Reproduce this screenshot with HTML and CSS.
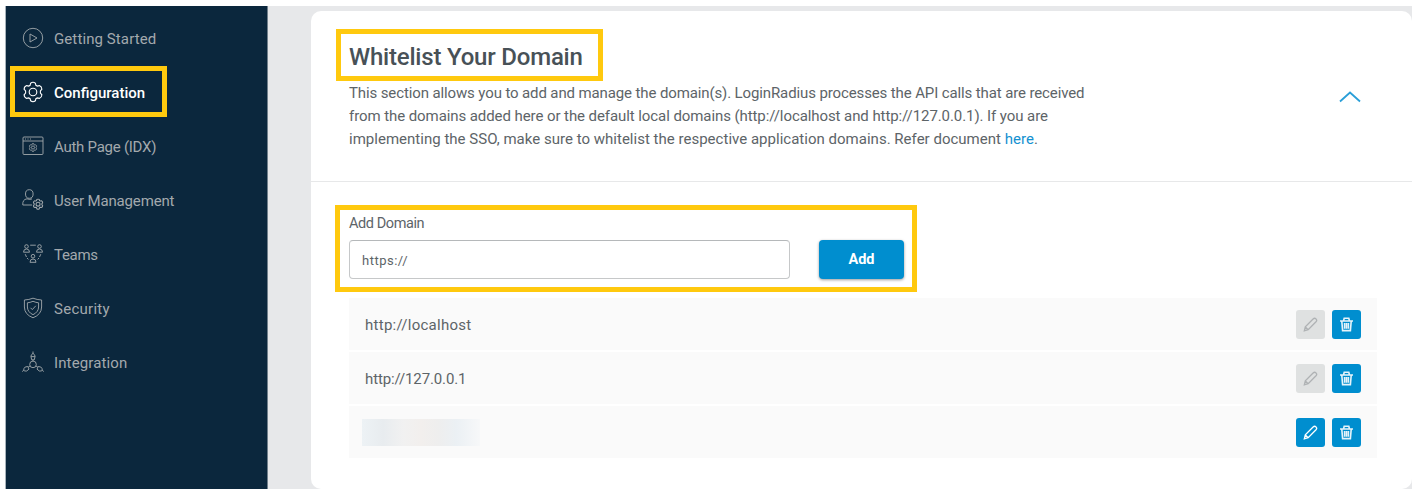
FILE: index.html
```html
<!DOCTYPE html>
<html lang="en">
<head>
<meta charset="utf-8">
<title>Whitelist Your Domain</title>
<link rel="stylesheet" href="styles.css">
</head>
<body>
<svg class="defs" aria-hidden="true">
  <symbol id="gear" viewBox="0 0 22 22">
    <path d="M8.6 2.2Q11 .4 13.4 2.2L13.9 4.3L15.3 5.1L17.3 4.6Q19.8 5.5 19.9 8.2L18.4 9.9V12.1L19.9 13.8Q19.8 16.5 17.3 17.4L15.3 16.9L13.9 17.7L13.4 19.8Q11 21.6 8.6 19.8L8.1 17.7L6.7 16.9L4.7 17.4Q2.2 16.5 2.1 13.8L3.6 12.1V9.9L2.1 8.2Q2.2 5.5 4.7 4.6L6.7 5.1L8.1 4.3Z"/>
    <circle cx="11" cy="11" r="3.8"/>
  </symbol>
  <symbol id="pencil" viewBox="0 0 15 15">
    <path d="M1.3 13.8L2.3 9.9L10.1 2Q11.6.6 13 1.9Q14.4 3.3 13 4.8L5.2 12.7ZM2.6 10.3L4.9 12.5"/>
  </symbol>
  <symbol id="trash" viewBox="0 0 15 15">
    <path d="M1 4H14M4.6 3.7L5.2 1.3H9.8L10.4 3.7M2.8 4.3L3.6 13.6H11.4L12.2 4.3M5.6 6V11.8M7.5 6V11.8M9.4 6V11.8"/>
  </symbol>
</svg>
<div class="app">
  <nav class="sidebar">
    <a class="item"><svg class="icon" viewBox="0 0 22 22"><circle cx="11" cy="11" r="9.7"/><path d="M8 7L15 11L8 15Z"/></svg><span class="t-start">Getting Started</span></a>
    <a class="item active"><svg class="icon"><use href="#gear"/></svg><span class="t-config">Configuration</span></a>
    <a class="item"><svg class="icon" viewBox="0 0 22 22"><rect x="1" y="2" width="20" height="17.5" rx="1"/><path d="M1 6H21M3 4H4M5.5 4H6.5M8 4H9"/><use class="bold" href="#gear" x="6.5" y="8" width="9" height="9"/></svg><span class="t-auth">Auth Page (IDX)</span></a>
    <a class="item"><svg class="icon" viewBox="0 0 22 22"><ellipse cx="7.3" cy="5" rx="3.8" ry="4.3"/><path d="M10 16H.8Q.3 10.5 5 9.8Q8 11 10 9.9"/><use class="bold" href="#gear" x="10.3" y="9.4" width="11.5" height="11.5"/></svg><span class="t-user">User Management</span></a>
    <a class="item"><svg class="icon" viewBox="0 0 22 22"><circle cx="4.5" cy="3.5" r="1.8"/><circle cx="17.5" cy="3.5" r="1.8"/><circle cx="11" cy="13.2" r="1.8"/><path d="M1.5 9.2Q1.5 6 4.5 6Q7.5 6 7.5 9.2ZM14.5 9.2Q14.5 6 17.5 6Q20.5 6 20.5 9.2ZM8 19.3Q8 16 11 16Q14 16 14 19.3ZM8.2 2.2H13.8M3.2 11.2L4.5 14M5 15L6.4 16.4M18.8 11.2L17.5 14M17 15L15.6 16.4"/></svg><span class="t-teams">Teams</span></a>
    <a class="item"><svg class="icon" viewBox="0 0 22 22"><path d="M11 1.2Q15 2.8 19.6 3V10Q19.5 17.5 11 20.8Q2.5 17.5 2.4 10V3Q7 2.8 11 1.2ZM11 4.3Q14 5.6 16.6 5.8V10Q16.5 15 11 17.7Q5.5 15 5.4 10V5.8Q8 5.6 11 4.3ZM8.5 10.8L10.3 12.6L13.8 8.8"/></svg><span class="t-sec">Security</span></a>
    <a class="item"><svg class="icon" viewBox="0 0 22 22"><circle cx="11" cy="13.4" r="3.3"/><path d="M11 .5V2.6M9.7 8.8L8.9 5.2Q9.4 3.2 11 2.4Q12.6 3.2 13.1 5.2L12.3 8.8ZM9.1 5.6H12.9M11 8.8V10M8 15L6.2 16.1M14 15L15.8 16.1M5.8 15.5L7 18.1L4.7 20Q2.6 20.3 1.7 19.4Q1.6 17.2 3.2 16ZM16.2 15.5L15 18.1L17.3 20Q19.4 20.3 20.3 19.4Q20.4 17.2 18.8 16ZM.2 20.5L1.7 19.4M21.8 20.5L20.3 19.4"/></svg><span class="t-int">Integration</span></a>
  </nav>
  <main class="main">
    <section class="card">
      <header class="head">
        <div>
          <h1><span>Whitelist Your Domain</span></h1>
          <p class="copy">
            <span class="l1">This section allows you to add and manage the domain(s). LoginRadius processes the API calls that are received</span>
            <span class="l2">from the domains added here or the default local domains (http://localhost and http://127.0.0.1). If you are</span>
            <span class="l3">implementing the SSO, make sure to whitelist the respective application domains. Refer document <a>here</a>.</span>
          </p>
        </div>
        <svg class="chevron" viewBox="0 0 22 12"><path d="M1 10.5L11 1.5L21 10.5"/></svg>
      </header>
      <div class="body">
        <div class="form">
          <label for="domain">Add Domain</label>
          <div class="controls"><input id="domain" value="https://"><button class="add">Add</button></div>
        </div>
        <ul class="rows">
          <li><span class="r1">http://localhost</span><button class="sq off"><svg><use href="#pencil"/></svg></button><button class="sq"><svg><use href="#trash"/></svg></button></li>
          <li><span class="r2">http://127.0.0.1</span><button class="sq off"><svg><use href="#pencil"/></svg></button><button class="sq"><svg><use href="#trash"/></svg></button></li>
          <li><span class="masked"></span><button class="sq"><svg><use href="#pencil"/></svg></button><button class="sq"><svg><use href="#trash"/></svg></button></li>
        </ul>
      </div>
    </section>
  </main>
</div>
<div class="mark mark-nav"></div>
<div class="mark mark-title"></div>
<div class="mark mark-form"></div>
</body>
</html>
```
FILE: styles.css
```css
* { box-sizing: border-box; }
body { margin: 0; background: #fff; font: 15px Roboto, "Liberation Sans", sans-serif; color: #5d6468; overflow: hidden; }
.defs { position: absolute; width: 0; height: 0; }
svg { fill: none; stroke: currentColor; flex: none; }
.app { display: flex; height: 489px; padding: 6px 0 0 6px; }
.sidebar { width: 262px; background: #0b273d; padding-top: 5px; border-right: 1px solid #71808c; box-shadow: -1px 0 #a9b4bc; }
.item { display: flex; align-items: center; height: 54px; padding-left: 16px; gap: 10px; color: #a3a9ad; white-space: nowrap; }
.item span { padding-top: 1px; }
.item.active { color: #fff; font-weight: 500; }
.t-start { letter-spacing: .1px; }
.t-auth { letter-spacing: -.26px; }
.t-user { letter-spacing: -.15px; }
.t-teams { letter-spacing: -.3px; }
.t-sec { letter-spacing: .27px; }
.t-int { letter-spacing: .12px; }
.icon { width: 22px; height: 22px; stroke-width: .9; }
.active .icon { stroke-width: 1.1; }
.bold { stroke-width: 2; }
.main { flex: 1; background: #e7e8ea; padding: 5px 0 0 43px; }
.card { height: 478px; background: #fff; border-radius: 10px; }
.head { display: flex; justify-content: space-between; height: 171px; padding: 30px 51px 0 38px; border-bottom: 1px solid #e7e8e9; }
h1 { margin: 0; font-size: 24px; font-weight: 500; line-height: 32px; color: #485157; letter-spacing: -.2px; white-space: nowrap; }
.copy { margin: 9px 0 0; line-height: 23px; }
.copy span { display: block; width: max-content; }
.copy .l1 { letter-spacing: -.12px; }
.copy .l2 { letter-spacing: -.08px; }
.copy .l3 { letter-spacing: .015px; }
.copy a { color: #1491d1; }
.chevron { width: 22px; height: 12px; margin-top: 50px; stroke: #2a9fd8; stroke-width: 1.8; }
.body { padding: 30px 35px 0 38px; }
.form { height: 86px; }
label { display: block; width: max-content; height: 28px; line-height: 24px; font-size: 14.5px; letter-spacing: -.42px; }
.controls { display: flex; gap: 29px; }
input { width: 441px; height: 39px; padding: 2px 12px 0; border: 1px solid #c6c8c9; border-top-color: #b5b8ba; border-radius: 4px; font: 13px Roboto, sans-serif; letter-spacing: .5px; color: #5d6468; }
.add { width: 85px; height: 39px; border: 0; border-radius: 4px; background: #008ecf; color: #fff; font: 700 14.5px Roboto, sans-serif; box-shadow: 0 1px 3px #0006; }
.rows { list-style: none; margin: 0; padding: 0; display: grid; gap: 2px; }
.rows li { display: flex; align-items: center; gap: 7px; height: 52px; padding: 0 16px; background: #fafafa; }
.rows li span { margin-right: auto; padding-top: 1px; }
.r1 { letter-spacing: .27px; }
.r2 { letter-spacing: -.12px; }
.sq { display: grid; place-items: center; width: 29px; height: 29px; padding: 0; border: 0; border-radius: 3px; background: #008ecf; color: #fff; }
.sq svg { width: 15px; height: 15px; stroke-width: 1.3; }
.sq:last-child svg { stroke-width: 1.6; opacity: .9; }
.sq.off { background: #dfe1e1; color: #afb2b4; }
.rows .masked { width: 118px; height: 27px; margin-left: -3px; background: linear-gradient(90deg, #edf2f5, #e8ecef 18%, #f1f1f1 35%, #f2efed 50%, #eeeeee 65%, #ebf0f4 80%, #f7f8f9); }
.mark { position: absolute; border: 5px solid #ffc90e; pointer-events: none; }
.mark-nav { left: 10px; top: 66px; width: 157px; height: 51px; }
.mark-title { left: 336px; top: 29px; width: 267px; height: 52px; }
.mark-form { left: 335px; top: 205px; width: 582px; height: 87px; }
```
